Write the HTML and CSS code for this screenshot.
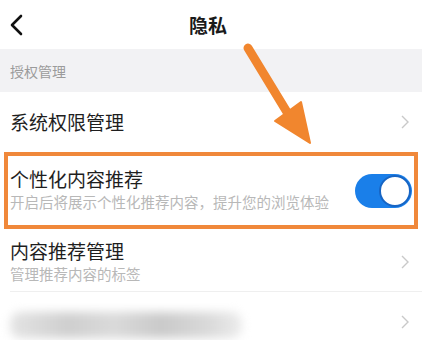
FILE: index.html
```html
<!DOCTYPE html>
<html lang="zh-CN">
<head>
    <meta charset="UTF-8">
    <meta name="viewport" content="width=device-width, initial-scale=1.0">
    <title>隐私</title>
    <link rel="stylesheet" href="styles.css">
</head>
<body>
    <div class="page">
        <header class="nav">
            <svg class="back" width="14" height="22" viewBox="0 0 14 22">
                <path d="M12 2 L3 11 L12 20" fill="none" stroke="#111" stroke-width="2.6" stroke-linecap="round" stroke-linejoin="round"/>
            </svg>
            <h1>隐私</h1>
        </header>

        <div class="section-title">授权管理</div>

        <div class="row">
            <div class="texts">
                <div class="title">系统权限管理</div>
            </div>
            <svg class="chev" width="8" height="14" viewBox="0 0 8 14"><path d="M1 1 L7 7 L1 13" fill="none" stroke="#c9c9c9" stroke-width="1.4"/></svg>
        </div>

        <div class="row highlight">
            <div class="texts">
                <div class="title">个性化内容推荐</div>
                <div class="sub">开启后将展示个性化推荐内容，提升您的浏览体验</div>
            </div>
            <div class="switch"><span class="knob"></span></div>
        </div>

        <div class="row line">
            <div class="texts">
                <div class="title">内容推荐管理</div>
                <div class="sub">管理推荐内容的标签</div>
            </div>
            <svg class="chev" width="8" height="14" viewBox="0 0 8 14"><path d="M1 1 L7 7 L1 13" fill="none" stroke="#c9c9c9" stroke-width="1.4"/></svg>
        </div>

        <div class="row">
            <div class="texts">
                <div class="blurred"></div>
            </div>
            <svg class="chev" width="8" height="14" viewBox="0 0 8 14"><path d="M1 1 L7 7 L1 13" fill="none" stroke="#c9c9c9" stroke-width="1.4"/></svg>
        </div>

        <!-- 标注箭头 -->
        <svg class="arrow" width="422" height="160" viewBox="0 0 422 160">
            <line x1="248" y1="48" x2="293" y2="122" stroke="#f1862e" stroke-width="9" stroke-linecap="round"/>
            <polygon points="275,121 301,102 310,143" fill="#f1862e" stroke="#f1862e" stroke-width="2" stroke-linejoin="round"/>
        </svg>
    </div>
</body>
</html>
```

FILE: styles.css
```css
*{
    padding: 0;
    margin: 0;
    box-sizing: border-box;
}
body{
    background-color: #fff;
    font-family: "Noto Sans CJK SC", "Noto Sans", sans-serif;
    color: #1e1e1e;
}
.page{
    position: relative;
    width: 422px;
    height: 340px;
    overflow: hidden;
}
.nav{
    height: 49px;
    display: flex;
    align-items: center;
    justify-content: center;
    position: relative;

    .back{
        position: absolute;
        left: 9px;
        top: 14px;
    }
    h1{
        font-size: 19px;
        font-weight: 700;
        color: #1a1a1a;
        margin-right: 6px;
    }
}
.section-title{
    height: 43px;
    background-color: #f2f2f4;
    padding-left: 10px;
    display: flex;
    align-items: center;
    font-size: 14px;
    color: #9b9b9b;
}
.row{
    display: flex;
    align-items: center;
    justify-content: space-between;
    height: 60px;
    padding: 0 13px 0 10px;

    .texts{
        display: flex;
        flex-direction: column;
    }
    .title{
        font-size: 19px;
        line-height: 24px;
    }
    .sub{
        font-size: 14.5px;
        line-height: 21px;
        color: #b8b8b8;
    }
}
.row.highlight{
    height: 77px;
    margin: 0 4px;
    border: 4px solid #f0883a;
    padding: 0 2px 0 2px;
    .title{
        margin-top: -2px;
    }
}
.row.line{
    height: 63px;
    position: relative;
    padding-top: 2px;
}
.row.line::after{
    content: "";
    position: absolute;
    left: 10px;
    right: 0;
    bottom: 0;
    border-bottom: 1px solid #efefef;
}
.switch{
    width: 57px;
    height: 34px;
    border-radius: 17px;
    background-color: #1a7fe9;
    display: flex;
    justify-content: flex-end;
    align-items: center;
    padding-right: 1px;

    .knob{
        width: 32px;
        height: 32px;
        border-radius: 50%;
        background-color: #fff;
        border: 2px solid #1765c4;
    }
}
.blurred{
    width: 232px;
    height: 26px;
    margin-top: 6px;
    border-radius: 10px;
    background: linear-gradient(90deg, #e4e4e4 0%, #cfcfcf 25%, #dadada 45%, #cacaca 65%, #d9d9d9 85%, #ececec 100%);
    filter: blur(5px);
}
.arrow{
    position: absolute;
    left: 0;
    top: 0;
    pointer-events: none;
}
```
